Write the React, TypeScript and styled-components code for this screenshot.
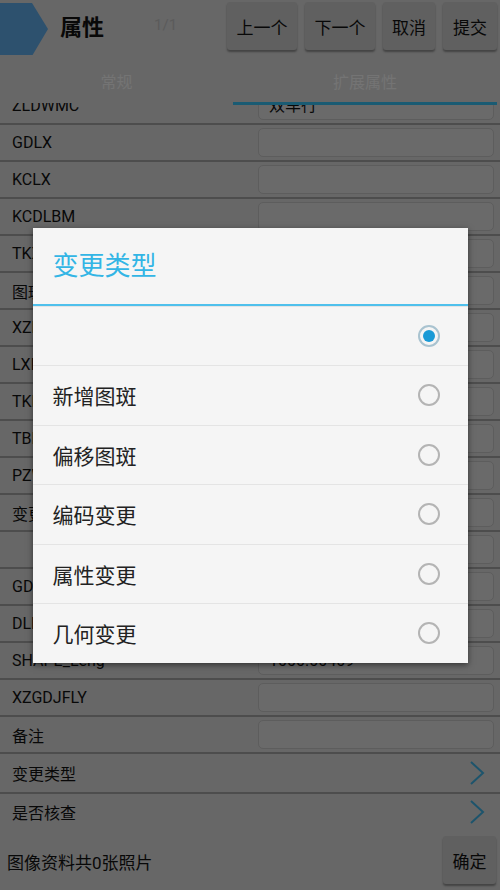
import React, { useLayoutEffect, useRef } from 'react';
import styled, { createGlobalStyle } from 'styled-components';

const GlobalStyle = createGlobalStyle`
  html, body {
    margin: 0;
    padding: 0;
    background: #000;
  }
  body {
    font-family: Roboto, "Noto Sans CJK SC", "Noto Sans", sans-serif;
  }
  * {
    box-sizing: border-box;
  }
`;

interface FieldRow {
  label: string;
  value?: string;
  arrow?: boolean;
}

const rows: FieldRow[] = [
  { label: 'ZLDWMC', value: '双车行' },
  { label: 'GDLX' },
  { label: 'KCLX' },
  { label: 'KCDLBM' },
  { label: 'TKXS' },
  { label: '图斑面积' },
  { label: 'XZDWMJ' },
  { label: 'LXDWMJ' },
  { label: 'TKMJ' },
  { label: 'TBDLMJ' },
  { label: 'PZWH' },
  { label: '变更范围' },
  { label: '' },
  { label: 'GDPDJB' },
  { label: 'DLBZ' },
  { label: 'SHAPE_Leng', value: '1000.00409' },
  { label: 'XZGDJFLY' },
  { label: '备注' },
  { label: '变更类型', arrow: true },
  { label: '是否核查', arrow: true },
];

const options = ['', '新增图斑', '偏移图斑', '编码变更', '属性变更', '几何变更'];

const Screen = styled.div`
  position: relative;
  width: 500px;
  height: 890px;
  overflow: hidden;
  display: flex;
  flex-direction: column;
  background: #cecece;
  color: #111;
`;

const TopBar = styled.div`
  height: 55px;
  display: flex;
  align-items: center;
  padding-right: 3px;
  flex-shrink: 0;
`;

const Badge = styled.svg`
  width: 48px;
  height: 55px;
  flex-shrink: 0;
`;

const Title = styled.div`
  margin-left: 12px;
  margin-bottom: 6px;
  font-size: 22px;
  font-weight: 700;
  color: #111;
`;

const Counter = styled.div`
  margin-left: 50px;
  margin-bottom: 6px;
  font-size: 15px;
  color: #b6b6b6;
`;

const Buttons = styled.div`
  margin-left: auto;
  display: flex;
  gap: 8px;
  align-self: flex-start;
  margin-top: 2px;
`;

const ActionButton = styled.button<{ $w: number }>`
  width: ${({ $w }) => $w}px;
  height: 48px;
  padding: 0;
  border: none;
  border-radius: 3px;
  background: #c0c0c0;
  box-shadow: 0 2px 2px rgba(0, 0, 0, 0.35);
  font-family: inherit;
  font-size: 17px;
  color: #111;
`;

const Tabs = styled.div`
  height: 48px;
  display: grid;
  grid-template-columns: 233px 1fr;
  padding-right: 3px;
  flex-shrink: 0;
  position: relative;
  z-index: 1;
`;

const Tab = styled.div<{ $active?: boolean }>`
  display: flex;
  align-items: center;
  justify-content: center;
  padding-top: 4px;
  font-size: 16px;
  color: #e8e8e8;
  border-bottom: 3px solid ${({ $active }) => ($active ? '#35b6e6' : 'transparent')};
  margin-bottom: -2px;
`;

const List = styled.div`
  flex: 1;
  overflow: hidden;
`;

const Row = styled.div<{ $tall?: boolean }>`
  height: ${({ $tall }) => ($tall ? 39.5 : 37)}px;
  display: flex;
  align-items: center;
  padding: 0 6px 0 12px;
  border-bottom: 2px solid #9a9a9a;
`;

const Label = styled.div`
  flex: 1;
  font-size: 16px;
  color: #111;
`;

const Field = styled.div`
  width: 236px;
  height: 29px;
  border: 1px solid #bababa;
  border-radius: 5px;
  background: #d4d4d4;
  padding-left: 10px;
  font-size: 16px;
  line-height: 27px;
  color: #111;
`;

const Chevron = styled.svg`
  width: 18px;
  height: 26px;
  margin-right: 8px;
`;

const BottomBar = styled.div`
  height: 60px;
  display: flex;
  align-items: center;
  padding: 0 4px 0 7px;
  flex-shrink: 0;
`;

const PhotoInfo = styled.div`
  flex: 1;
  font-size: 17px;
  color: #111;
  padding-top: 3px;
`;

const Overlay = styled.div`
  position: absolute;
  inset: 0;
  background: rgba(0, 0, 0, 0.5);
  display: flex;
  align-items: center;
  justify-content: center;
  z-index: 5;
`;

const Dialog = styled.div`
  width: 435px;
  height: 435px;
  background: #f5f5f5;
  box-shadow: 0 2px 6px rgba(0, 0, 0, 0.5);
  display: flex;
  flex-direction: column;
`;

const DialogTitle = styled.div`
  height: 78px;
  flex-shrink: 0;
  display: flex;
  align-items: center;
  padding: 0 20px 4px;
  font-size: 26px;
  color: #33b5e5;
  border-bottom: 2px solid #4fc0ec;
`;

const Option = styled.div`
  flex: 1;
  display: flex;
  align-items: center;
  padding: 0 28px 0 20px;
  border-top: 1px solid #e4e4e4;
  font-size: 21px;
  color: #222;

  &:first-child {
    border-top: none;
  }
`;

const OptionText = styled.div`
  flex: 1;
`;

const Radio = styled.span<{ $checked?: boolean }>`
  width: 22px;
  height: 22px;
  border-radius: 50%;
  border: 2px solid ${({ $checked }) => ($checked ? '#a9c3d0' : '#b4b4b4')};
  display: flex;
  align-items: center;
  justify-content: center;

  &::after {
    content: '';
    display: ${({ $checked }) => ($checked ? 'block' : 'none')};
    width: 12px;
    height: 12px;
    border-radius: 50%;
    background: #1a9ad6;
  }
`;

const ArrowIcon = () => (
  <Chevron viewBox="0 0 18 26">
    <path d="M3 2 L15 13 L3 24" fill="none" stroke="#3aa8d8" strokeWidth="2" />
  </Chevron>
);

export default function App() {
  const listRef = useRef<HTMLDivElement>(null);

  useLayoutEffect(() => {
    if (listRef.current) listRef.current.scrollTop = 15;
  }, []);

  return (
    <>
      <GlobalStyle />
      <Screen>
        <TopBar>
          <Badge viewBox="0 0 48 55">
            <polygon points="0,3 32,3 48,29 32,56 0,56" fill="#5aa2dc" />
          </Badge>
          <Title>属性</Title>
          <Counter>1/1</Counter>
          <Buttons>
            <ActionButton $w={70}>上一个</ActionButton>
            <ActionButton $w={70}>下一个</ActionButton>
            <ActionButton $w={52}>取消</ActionButton>
            <ActionButton $w={54}>提交</ActionButton>
          </Buttons>
        </TopBar>
        <Tabs>
          <Tab>常规</Tab>
          <Tab $active>扩展属性</Tab>
        </Tabs>
        <List ref={listRef}>
          {rows.map((r, i) => (
            <Row key={i} $tall={r.arrow}>
              <Label>{r.label}</Label>
              {r.arrow ? <ArrowIcon /> : <Field>{r.value}</Field>}
            </Row>
          ))}
        </List>
        <BottomBar>
          <PhotoInfo>图像资料共0张照片</PhotoInfo>
          <ActionButton $w={53}>确定</ActionButton>
        </BottomBar>
        <Overlay>
          <Dialog>
            <DialogTitle>变更类型</DialogTitle>
            {options.map((o, i) => (
              <Option key={i}>
                <OptionText>{o}</OptionText>
                <Radio $checked={i === 0} />
              </Option>
            ))}
          </Dialog>
        </Overlay>
      </Screen>
    </>
  );
}
